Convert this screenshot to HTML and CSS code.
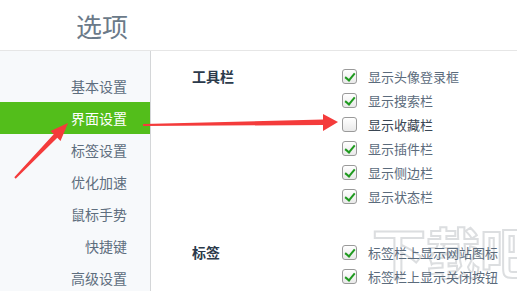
FILE: index.html
```html
<!DOCTYPE html>
<html lang="zh-CN">
<head>
  <meta charset="UTF-8" />
  <title>选项</title>
  <link rel="stylesheet" href="styles.css">
</head>
<body>
<div id="page">
  <div class="header">选项</div>

  <div class="body">
    <!-- 左侧菜单 -->
    <ul class="menu">
      <li>基本设置</li>
      <li class="active">界面设置</li>
      <li>标签设置</li>
      <li>优化加速</li>
      <li>鼠标手势</li>
      <li>快捷键</li>
      <li>高级设置</li>
    </ul>

    <!-- 设置内容 -->
    <div class="content">
      <div class="section">
        <div class="section-title">工具栏</div>
        <div class="options">
          <label class="opt"><span class="box on"></span>显示头像登录框</label>
          <label class="opt"><span class="box on"></span>显示搜索栏</label>
          <label class="opt dark"><span class="box"></span>显示收藏栏</label>
          <label class="opt"><span class="box on"></span>显示插件栏</label>
          <label class="opt"><span class="box on"></span>显示侧边栏</label>
          <label class="opt"><span class="box on"></span>显示状态栏</label>
        </div>
      </div>
      <div class="section">
        <div class="section-title">标签</div>
        <div class="options">
          <label class="opt"><span class="box on"></span>标签栏上显示网站图标</label>
          <label class="opt"><span class="box on"></span>标签栏上显示关闭按钮</label>
        </div>
      </div>
    </div>
  </div>

  <!-- 水印 -->
  <div class="watermark">下载吧</div>

  <!-- 红色箭头 -->
  <svg class="arrows" width="517" height="291" viewBox="0 0 517 291">
    <polygon points="14.3,177.3 53.7,134.3 50.5,131.1 68,123 60.5,140.9 57.3,137.7 15.7,178.7" fill="#f43b3b"/>
    <polygon points="143,124 323,119.5 323,114 338,122 323,131 323,125 143,126" fill="#f43b3b"/>
  </svg>
</div>
</body>
</html>
```

FILE: styles.css
```css
* { box-sizing: border-box; }
body {
  margin: 0;
  background: #fff;
  font-family: "Noto Sans CJK SC", "Noto Sans", sans-serif;
  overflow: hidden;
}

#page {
  width: 517px;
  height: 291px;
  position: relative;
  z-index: 0;
  overflow: hidden;
}

.header {
  height: 51px;
  border-bottom: 1px solid #e6e6e6;
  padding-left: 76px;
  font-size: 26px;
  line-height: 51px;
  color: #6b7a89;
}

.body {
  display: flex;
  height: 240px;
}

.menu {
  list-style: none;
  margin: 0;
  padding: 19px 0 0;
  width: 151px;
  background: #f7f9fb;
  border-right: 1px solid #d4d6d8;
}

.menu li {
  height: 32px;
  line-height: 32px;
  padding-right: 23px;
  text-align: right;
  font-size: 14px;
  color: #5e6e7e;
}

.menu li.active {
  background: #53be1b;
  color: #fff;
}

.content {
  flex: 1;
  padding: 13px 0 0 41px;
  display: flex;
  flex-direction: column;
  gap: 32px;
}

.section {
  display: flex;
}

.section-title {
  width: 150px;
  height: 24px;
  line-height: 24px;
  font-size: 14px;
  font-weight: bold;
  color: #2b3a4b;
}

.options {
  display: flex;
  flex-direction: column;
}

.opt {
  height: 24px;
  display: flex;
  align-items: center;
  gap: 11px;
  font-size: 13px;
  color: #5b6b7c;
  white-space: nowrap;
}

.opt.dark { color: #3a4654; }

.box {
  width: 15px;
  height: 15px;
  border: 1px solid #9a9a9a;
  border-radius: 3px;
  background: linear-gradient(#ffffff, #e9e9e9);
  position: relative;
}

.box.on::after {
  content: "";
  position: absolute;
  left: 4px;
  top: 1px;
  width: 4px;
  height: 8px;
  border: solid #1f9a1f;
  border-width: 0 2px 2px 0;
  transform: rotate(40deg);
}

/* 水印放在内容后面 */
.watermark {
  position: absolute;
  z-index: -1;
  left: 372px;
  top: 224px;
  font-size: 54px;
  line-height: 1;
  font-weight: bold;
  color: transparent;
  -webkit-text-stroke: 2px #dcdee0;
  white-space: nowrap;
}

.arrows {
  position: absolute;
  left: 0;
  top: 0;
}
```
